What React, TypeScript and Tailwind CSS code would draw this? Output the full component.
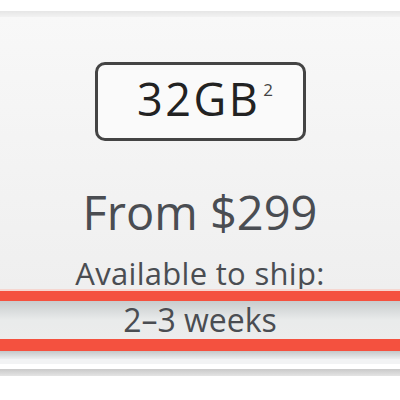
const App = () => {
  return (
    <div className="w-[400px] h-[400px] bg-white flex flex-col overflow-hidden font-['Open_Sans',sans-serif]">
      <div className="h-[11px] bg-white" />
      <div className="h-[6px] bg-gradient-to-b from-[#e6e6e6] to-[#f2f2f2]" />
      <div className="flex flex-col items-center bg-gradient-to-b from-[#f8f8f8] to-[#efefef] pt-[45px] h-[272px]">
        <div className="w-[211px] h-[79px] rounded-[10px] border-[3px] border-[#444] bg-[#fafafa] flex items-center justify-center pl-[10px] pb-[6px]">
          <div className="flex items-start">
            <p className="text-[45px] leading-none text-[#222] tracking-[2.5px]">32GB</p>
            <span className="text-[17px] leading-none text-[#444] ml-[3px] mt-[5px]">2</span>
          </div>
        </div>
        <p className="mt-[48px] text-[47px] leading-none text-[#4a4d52]">From $299</p>
        <p className="mt-[22px] text-[31px] leading-none text-[#4a4d52] tracking-[0.3px]">Available to ship:</p>
      </div>
      <div className="h-[2px] bg-[#f6d6d0]" />
      <div className="h-[10px] bg-[#f4513f]" />
      <div className="h-[38px] bg-gradient-to-b from-[#c8cccd] via-[#e9ebeb] to-[#ececec] flex items-end justify-center">
        <p className="text-[32px] leading-none text-[#4a4d52] pb-[3px]">2–3 weeks</p>
      </div>
      <div className="h-[12px] bg-[#f4513f]" />
      <div className="h-[8px] bg-gradient-to-b from-[#c4c8c9] to-[#eceeef]" />
      <div className="h-[5px] bg-[#f2f3f4]" />
      <div className="h-[5px] bg-white" />
      <div className="h-[7px] bg-gradient-to-b from-[#c9c9c9] to-[#e4e4e4]" />
      <div className="flex-1 bg-white" />
    </div>
  );
};

export default App;
